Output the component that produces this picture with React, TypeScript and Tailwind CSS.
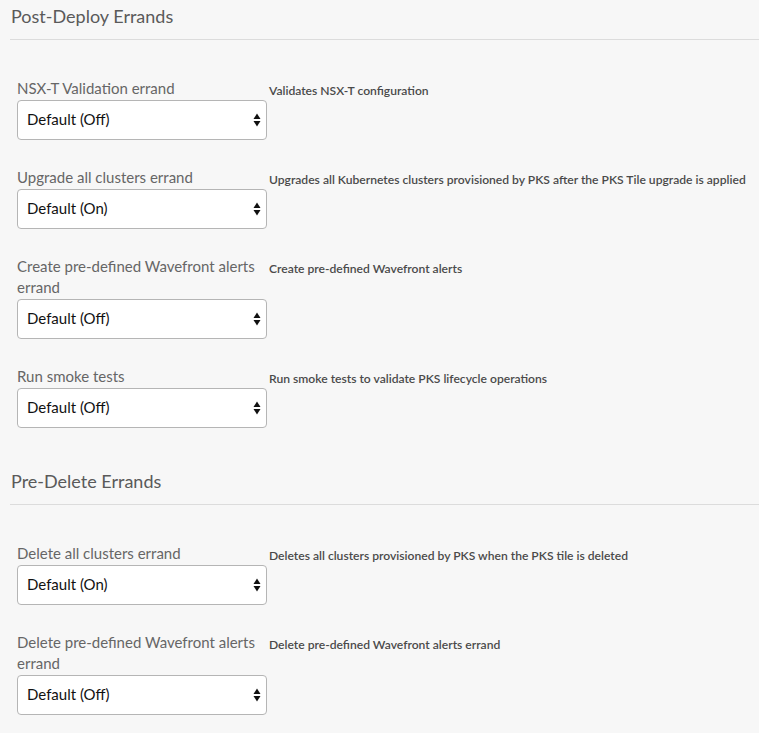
import React from "react";

type Row = { label: string; value: string; desc: string };

const post: Row[] = [
  { label: "NSX-T Validation errand", value: "Default (Off)", desc: "Validates NSX-T configuration" },
  { label: "Upgrade all clusters errand", value: "Default (On)", desc: "Upgrades all Kubernetes clusters provisioned by PKS after the PKS Tile upgrade is applied" },
  { label: "Create pre-defined Wavefront alerts errand", value: "Default (Off)", desc: "Create pre-defined Wavefront alerts" },
  { label: "Run smoke tests", value: "Default (Off)", desc: "Run smoke tests to validate PKS lifecycle operations" },
];

const pre: Row[] = [
  { label: "Delete all clusters errand", value: "Default (On)", desc: "Deletes all clusters provisioned by PKS when the PKS tile is deleted" },
  { label: "Delete pre-defined Wavefront alerts errand", value: "Default (Off)", desc: "Delete pre-defined Wavefront alerts errand" },
];

function Arrows() {
  return (
    <svg width="8" height="14" viewBox="0 0 8 14" className="shrink-0">
      <path d="M4 0.5 L7.5 6 L0.5 6 Z" fill="#111" />
      <path d="M0.5 8 L7.5 8 L4 13.5 Z" fill="#111" />
    </svg>
  );
}

function ErrandRow({ row }: { row: Row }) {
  return (
    <div className="flex">
      <div className="w-[250px] shrink-0">
        <div className="text-[15px] leading-[21px] text-[#666]">{row.label}</div>
        <div className="mt-[1px] h-[40px] rounded-[4px] border border-[#b5b5b5] bg-white flex items-center justify-between pl-[9px] pr-[5px]">
          <span className="text-[15px] leading-[20px] text-[#111] -mt-[3px]">{row.value}</span>
          <Arrows />
        </div>
      </div>
      <div className="ml-[2px] pt-[5px] text-[12.1px] leading-[16px] font-semibold text-[#4a4a4a] whitespace-nowrap">
        {row.desc}
      </div>
    </div>
  );
}

function Section({ title, rows }: { title: string; rows: Row[] }) {
  return (
    <div>
      <h2 className="pl-[1px] text-[18px] leading-[24px] text-[#5a5a5a]">{title}</h2>
      <div className="mt-[11px] border-t border-[#dcdcdc]" />
      <div className="mt-[38px] pl-[7px] flex flex-col gap-[27px]">
        {rows.map((r) => (
          <ErrandRow key={r.label} row={r} />
        ))}
      </div>
    </div>
  );
}

export default function App() {
  return (
    <div className="min-h-[733px] w-[759px] overflow-hidden bg-[#f7f7f7] pl-[10px] pt-[4px]" style={{ fontFamily: "Lato, 'Open Sans', sans-serif" }}>
      <Section title="Post-Deploy Errands" rows={post} />
      <div className="mt-[41px]">
        <Section title="Pre-Delete Errands" rows={pre} />
      </div>
    </div>
  );
}
